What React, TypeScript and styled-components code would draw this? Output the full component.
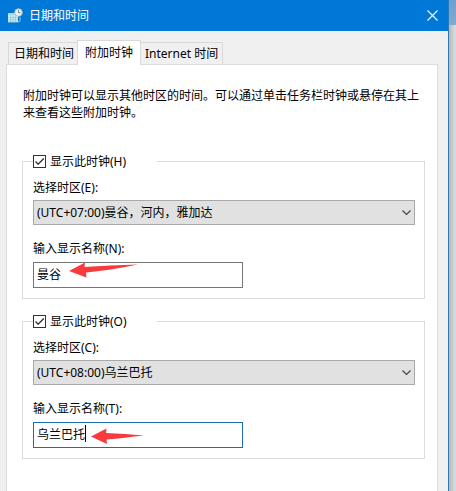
import React, { useState } from 'react';
import styled, { createGlobalStyle } from 'styled-components';

const GlobalStyle = createGlobalStyle`
  *, *::before, *::after { box-sizing: border-box; }
  body {
    margin: 0;
    color: #000;
    font: 12px/17px "Noto Sans", "Noto Sans CJK SC", sans-serif;
  }
  button, input, select { font: inherit; color: inherit; }
`;

const Desktop = styled.div`
  display: flex;
  min-height: 100vh;
`;

const Backdrop = styled.div`
  width: 7px;
  background:
    linear-gradient(#6f9fd0, #7fabd0) top / 100% 25px no-repeat,
    linear-gradient(90deg, #bcb6b2, #d9d9db 80%);
`;

const Dialog = styled.main`
  flex: 1;
  min-width: 0;
  display: flex;
  flex-direction: column;
  background: #f0f0f0;
  border-right: 1px solid #2a7ab8;
`;

const TitleBar = styled.header`
  display: flex;
  align-items: center;
  height: 31px;
  padding: 0 8px 0 7px;
  background: #0078d7;
  color: #fff;
`;

const Title = styled.h1`
  flex: 1;
  margin: 0 0 0 6px;
  font-size: 12px;
  font-weight: 400;
`;

const CloseButton = styled.button`
  display: flex;
  padding: 2px;
  border: 0;
  background: none;
`;

const Tabs = styled.div`
  display: flex;
  align-items: flex-end;
  padding: 9px 8px 0;
`;

const Tab = styled.button<{ $active?: boolean }>`
  height: ${p => (p.$active ? 25 : 22)}px;
  margin: ${p => (p.$active ? '0 -2px -1px' : '0')};
  padding: ${p => (p.$active ? '0 7px 2px' : '0 4px 0 5px')};
  border: 1px solid #d9d9d9;
  border-bottom: 0;
  background: ${p => (p.$active ? '#fff' : '#f0f0f0')};
  white-space: nowrap;
  position: relative;
  z-index: ${p => (p.$active ? 1 : 0)};
`;

const Panel = styled.section`
  flex: 1;
  display: flex;
  flex-direction: column;
  margin: 0 10px 0 6px;
  padding: 22px 12px 32px 15px;
  border: 1px solid #dcdcdc;
  border-bottom: 0;
  background: #fff;
`;

const Intro = styled.p`
  margin: 0 0 32px 1px;
`;

const Group = styled.fieldset`
  display: flex;
  flex-direction: column;
  align-items: flex-start;
  min-width: 0;
  margin: 0 0 14px;
  padding: 9px 9px 10px 10px;
  border: 1px solid #dcdcdc;
`;

const Legend = styled.legend`
  width: 124px;
  padding: 0;
`;

const CheckLabel = styled.label`
  display: flex;
  align-items: center;
  gap: 4px;
`;

const CheckBox = styled.input`
  appearance: none;
  width: 13px;
  height: 13px;
  margin: 0;
  border: 1px solid #333;
  background: #fff;

  &:checked {
    background: url("data:image/svg+xml,%3Csvg xmlns='http://www.w3.org/2000/svg' viewBox='0 0 11 11'%3E%3Cpath d='M1.5 5.5 4.2 8.2 9.8 2.5' fill='none' stroke='%23222' stroke-width='1.2'/%3E%3C/svg%3E") center / 11px no-repeat;
  }
`;

const SelectWrap = styled.div`
  position: relative;
  width: 100%;
  margin: 4px 0 15px;
`;

const Select = styled.select`
  appearance: none;
  display: block;
  width: 100%;
  height: 25px;
  padding: 0 24px 0 3px;
  border: 1px solid #a9a9a9;
  border-radius: 0;
  background: #e1e1e1;
`;

const Chevron = styled.svg`
  position: absolute;
  right: 4px;
  top: 10px;
  pointer-events: none;
`;

const FieldWrap = styled.div`
  position: relative;
  width: 210px;
  margin-top: 5px;
`;

const TextBox = styled.input<{ $active?: boolean }>`
  display: block;
  width: 100%;
  height: 26px;
  padding: 0 4px 2px 3px;
  border: 1px solid ${p => (p.$active ? '#1c6fae' : '#757575')};
  border-radius: 0;
  outline: 0;
  background: #fff;
`;

const Caret = styled.span`
  position: absolute;
  left: 52px;
  top: 3px;
  width: 1px;
  height: 17px;
  background: #000;
`;

const Arrow = styled.svg<{ $left: number; $top: number }>`
  position: absolute;
  left: ${p => p.$left}px;
  top: ${p => p.$top}px;
  pointer-events: none;
`;

const ClockIcon = () => (
  <svg width="16" height="16" viewBox="0 0 16 16" aria-hidden="true">
    <path d="M1 5h10v9H1z" fill="#d9f1f5" />
    <path d="M1 5h10v2H1z" fill="#a9dcea" />
    <path d="M3.5 7v7M6 7v7M8.5 7v7M1 9.4h10M1 11.7h10" stroke="#7cc6da" strokeWidth="0.7" />
    <path d="M1 14h10l2-1v-4" fill="none" stroke="#8bcbd9" />
    <circle cx="11.5" cy="4.5" r="3.8" fill="#eef0f0" stroke="#b7b9b8" strokeWidth="0.9" />
    <path d="M11.5 2v2.7h2" fill="none" stroke="#6d7880" strokeWidth="0.9" />
  </svg>
);

const LongArrow = () => (
  <Arrow $left={36} $top={0} width="70" height="17" viewBox="0 0 70 17" aria-hidden="true">
    <path d="M0 9 16 .5 15.5 5C32 4 50 3 69 2.5 52 6 35 9 17 10.5L17.5 15.5Z" fill="#f83a3d" />
  </Arrow>
);

const ShortArrow = () => (
  <Arrow $left={58} $top={6} width="54" height="17" viewBox="0 0 54 17" aria-hidden="true">
    <path d="M0 8.5 15.5.5 15 5C28 5.5 40 6.5 53 7.5 40 9 28 10.5 15.5 11.5L16 16Z" fill="#f83a3d" />
  </Arrow>
);

interface ClockProps {
  id: string;
  keys: [string, string, string];
  zone: string;
  name: string;
  active?: boolean;
  children: React.ReactNode;
}

function ClockGroup({ id, keys, zone, name, active, children }: ClockProps) {
  const [value, setValue] = useState(name);
  return (
    <Group>
      <Legend>
        <CheckLabel>
          <CheckBox type="checkbox" defaultChecked />
          显示此时钟({keys[0]})
        </CheckLabel>
      </Legend>
      <label htmlFor={`${id}-zone`}>选择时区({keys[1]}):</label>
      <SelectWrap>
        <Select id={`${id}-zone`}>
          <option>{zone}</option>
        </Select>
        <Chevron width="9" height="6" viewBox="0 0 9 6" aria-hidden="true">
          <path d="M.5.5 4.5 4.5 8.5.5" fill="none" stroke="#444" strokeWidth="1.2" />
        </Chevron>
      </SelectWrap>
      <label htmlFor={`${id}-name`}>输入显示名称({keys[2]}):</label>
      <FieldWrap>
        <TextBox
          id={`${id}-name`}
          type="text"
          $active={active}
          value={value}
          onChange={e => setValue(e.target.value)}
        />
        {active && value === name && <Caret />}
        {children}
      </FieldWrap>
    </Group>
  );
}

export default function App() {
  return (
    <Desktop>
      <GlobalStyle />
      <Dialog>
        <TitleBar>
          <ClockIcon />
          <Title>日期和时间</Title>
          <CloseButton type="button" aria-label="关闭">
            <svg width="11" height="11" viewBox="0 0 11 11" aria-hidden="true">
              <path d="M.5.5l10 10M10.5.5l-10 10" stroke="#fff" strokeWidth="1.1" />
            </svg>
          </CloseButton>
        </TitleBar>
        <Tabs role="tablist">
          <Tab type="button" role="tab" aria-selected={false}>日期和时间</Tab>
          <Tab type="button" role="tab" aria-selected $active>附加时钟</Tab>
          <Tab type="button" role="tab" aria-selected={false}>Internet 时间</Tab>
        </Tabs>
        <Panel role="tabpanel">
          <Intro>附加时钟可以显示其他时区的时间。可以通过单击任务栏时钟或悬停在其上来查看这些附加时钟。</Intro>
          <ClockGroup id="clock1" keys={['H', 'E', 'N']} zone="(UTC+07:00)曼谷，河内，雅加达" name="曼谷">
            <LongArrow />
          </ClockGroup>
          <ClockGroup id="clock2" keys={['O', 'C', 'T']} zone="(UTC+08:00)乌兰巴托" name="乌兰巴托" active>
            <ShortArrow />
          </ClockGroup>
        </Panel>
      </Dialog>
      <Backdrop />
    </Desktop>
  );
}
